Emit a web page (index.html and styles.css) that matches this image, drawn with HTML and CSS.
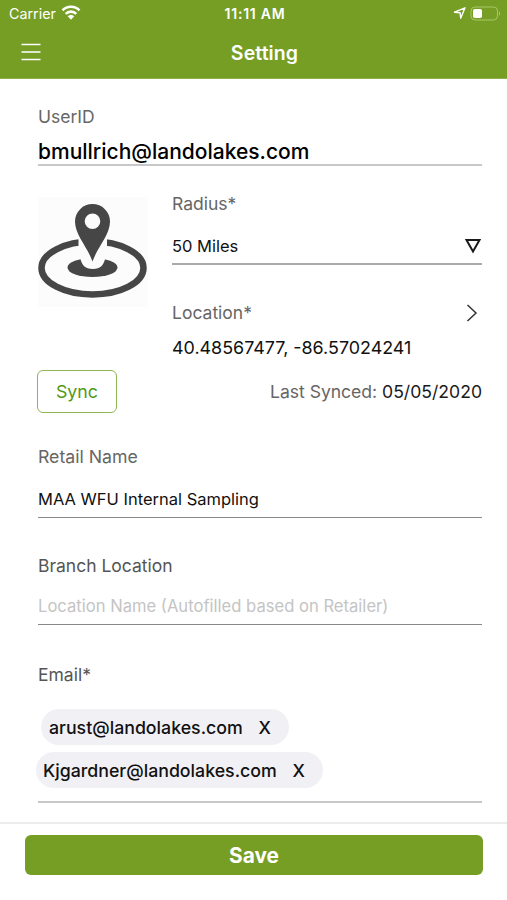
FILE: index.html
```html
<!DOCTYPE html>
<html lang="en">
<head>
<meta charset="utf-8">
<title>Setting</title>
<link rel="stylesheet" href="styles.css">
</head>
<body>
<header class="header">
  <div class="status">
    <div class="carrier"><span>Carrier</span>
      <svg class="wifi" width="20" height="15" viewBox="0 0 20 15"><g fill="none" stroke="#fff" stroke-width="2.6"><path d="M1.500 5.300a12 12 0 0 1 17 0"/><path d="M4.700 8.800a7.500 7.500 0 0 1 10.600 0"/></g><path fill="#fff" d="M6.700 11.300a4.800 4.800 0 0 1 6.600 0L10 14.700z"/></svg>
    </div>
    <time class="clock">11:11 AM</time>
    <div class="indicators">
      <svg width="14" height="14" viewBox="0 0 14 14"><path d="M1.500 6.200 12 1.800 7.700 12.200 7.100 6.800z" fill="none" stroke="#fff" stroke-width="1.400" stroke-linejoin="round"/></svg>
      <svg width="31" height="15" viewBox="0 0 31 15"><rect x="1" y="1" width="26.500" height="13" rx="4" fill="none" stroke="#a9c768"/><rect x="3" y="3" width="9" height="9" rx="1.800" fill="#fff"/><path d="M29 5.300v4.500c1.500-.7 1.500-3.800 0-4.500" fill="#a9c768"/></svg>
    </div>
  </div>
  <div class="nav">
    <svg class="menu" width="20" height="18" viewBox="0 0 20 18"><path d="M.5 1.500h19M.5 9h19M.5 16.500h19" stroke="#fff" stroke-width="1.700"/></svg>
    <h1 class="title">Setting</h1>
  </div>
</header>
<main class="form">
  <section class="user">
    <div class="label">UserID</div>
    <div class="user-value">bmullrich@landolakes.com</div>
  </section>
  <section class="place">
    <svg class="pin" width="110" height="110" viewBox="0 0 110 110">
      <rect width="110" height="110" fill="#fcfcfc"/>
      <ellipse cx="54.500" cy="71" rx="51" ry="26.500" fill="none" stroke="#464646" stroke-width="6.500"/>
      <path d="M40.500 39h28.500v18H40.500z" fill="#fcfcfc"/>
      <ellipse cx="54.500" cy="70.500" rx="25" ry="9.500" fill="#464646"/>
      <path d="M42 59h25.500c-1 9-5 13-12.700 13S43 68 42 59z" fill="#fcfcfc"/>
      <path fill="#464646" fill-rule="evenodd" d="M54.500 64.500C49 49 37 38 37 24.500a17.500 17.500 0 0 1 35 0C72 38 60 49 54.500 64.500zM54.500 16.500a7.800 7.800 0 1 0 0 15.600a7.800 7.800 0 0 0 0-15.600z"/>
    </svg>
    <div class="place-fields">
      <div class="label">Radius*</div>
      <div class="select"><span>50 Miles</span>
        <svg width="18" height="16" viewBox="0 0 18 16"><path d="M2.500 2h13L9 13.500z" fill="none" stroke="#1a1a1a" stroke-width="2"/></svg>
      </div>
      <div class="label location"><span>Location*</span>
        <svg width="12" height="18" viewBox="0 0 12 18"><path d="M1.500 1 10 9l-8.500 8" fill="none" stroke="#333" stroke-width="1.500"/></svg>
      </div>
      <div class="coords">40.48567477, -86.57024241</div>
    </div>
  </section>
  <section class="sync-row">
    <button class="sync">Sync</button>
    <div class="synced"><span class="last">Last Synced:</span><span class="date">05/05/2020</span></div>
  </section>
  <section class="field">
    <div class="label retail">Retail Name</div>
    <div class="value">MAA WFU Internal Sampling</div>
  </section>
  <section class="field branch">
    <div class="label dark">Branch Location</div>
    <div class="value placeholder">Location Name (Autofilled based on Retailer)</div>
  </section>
  <section class="emails">
    <div class="label dark">Email*</div>
    <div class="chips">
      <div class="chip first"><span>arust@landolakes.com</span><span>X</span></div>
      <div class="chip second"><span>Kjgardner@landolakes.com</span><span>X</span></div>
    </div>
  </section>
</main>
<footer class="footer"><button class="save">Save</button></footer>
</body>
</html>
```
FILE: styles.css
```css
* { box-sizing: border-box; }
body { margin: 0; width: 507px; height: 900px; overflow: hidden; background: #fff; color: #111; font-family: Inter, "Liberation Sans", sans-serif; display: flex; flex-direction: column; }
svg { display: block; flex: none; }
span { white-space: nowrap; }
button { font-family: inherit; margin: 0; padding: 0; }
.header { height: 79px; background: #769e24; color: #fff; border-bottom: 1px solid #8db04b; flex: none; }
.status { height: 27px; display: grid; grid-template-columns: 1fr auto 1fr; align-items: center; padding: 0 6px 0 9px; }
.carrier { display: flex; align-items: center; gap: 5px; font-size: 14.3px; }
.wifi { margin-top: -2px; }
.clock { font-size: 14px; font-weight: 600; letter-spacing: .75px; }
.indicators { display: flex; justify-content: flex-end; align-items: center; gap: 3px; margin-top: -1px; }
.nav { height: 51px; display: grid; grid-template-columns: 20px 1fr; align-items: center; padding: 0 21px 0 21px; }
.title { margin: 0; padding-left: 2px; text-align: center; font-size: 19.5px; font-weight: 600; letter-spacing: .1px; }
.menu { margin-top: -1px; }
.form { padding: 26px 25px 0 38px; height: 743px; flex: none; }
.label { height: 24px; line-height: 24px; font-size: 17.5px; color: #666; white-space: nowrap; }
.retail { font-size: 17.7px; }
.label.dark { color: #555; }
.user { height: 61px; border-bottom: 2px solid #c8c8c8; }
.user-value { height: 35px; line-height: 45px; font-size: 21px; font-weight: 500; color: #000; }
.place { display: flex; justify-content: space-between; margin-top: 26px; height: 168px; }
.pin { margin-top: 5px; }
.place-fields { width: 310px; }
.select { display: flex; justify-content: space-between; align-items: center; height: 49px; padding-top: 12px; border-bottom: 2px solid #aaa; font-size: 16.5px; }
.location { display: flex; justify-content: space-between; align-items: center; margin-top: 36px; padding-right: 4px; }
.coords { line-height: 24px; margin-top: 11px; font-size: 17.9px; }
.sync-row { display: flex; justify-content: space-between; align-items: center; height: 43px; margin-top: 10px; }
.sync { width: 80px; height: 43px; margin-left: -1px; border: 1.5px solid #8db653; border-radius: 6px; background: #fff; color: #519a16; font-size: 17.8px; }
.synced { display: flex; gap: 5px; font-size: 17.6px; color: #666; }
.date { color: #1a1a1a; }
.last { letter-spacing: -.05px; }
.field { margin-top: 32px; height: 73px; border-bottom: 1px solid #888; }
.branch { margin-top: 36px; height: 71px; }
.value { margin-top: 18px; line-height: 24px; font-size: 16.5px; white-space: nowrap; }
.placeholder { margin-top: 16px; color: #c4c4c4; font-size: 16.6px; }
.emails { margin-top: 38px; height: 140px; border-bottom: 2px solid #c8c8c8; }
.chips { display: flex; flex-direction: column; gap: 7px; align-items: flex-start; margin-top: 22px; }
.chip { height: 36px; border-radius: 18px; background: #f1f0f5; display: flex; align-items: center; justify-content: space-between; font-size: 17.75px; font-weight: 500; }
.first { width: 248px; margin-left: 3px; padding: 0 18px 0 8px; }
.second { width: 287px; margin-left: -2px; padding: 0 18px 0 7px; }
.footer { flex: none; height: 78px; padding: 12px 24px 0 25px; border-top: 2px solid #ececec; }
.save { display: block; width: 458px; height: 40px; margin-top: -1px; border: 0; border-radius: 6px; background: #769e24; color: #fff; font-size: 20.8px; font-weight: 700; }
```
